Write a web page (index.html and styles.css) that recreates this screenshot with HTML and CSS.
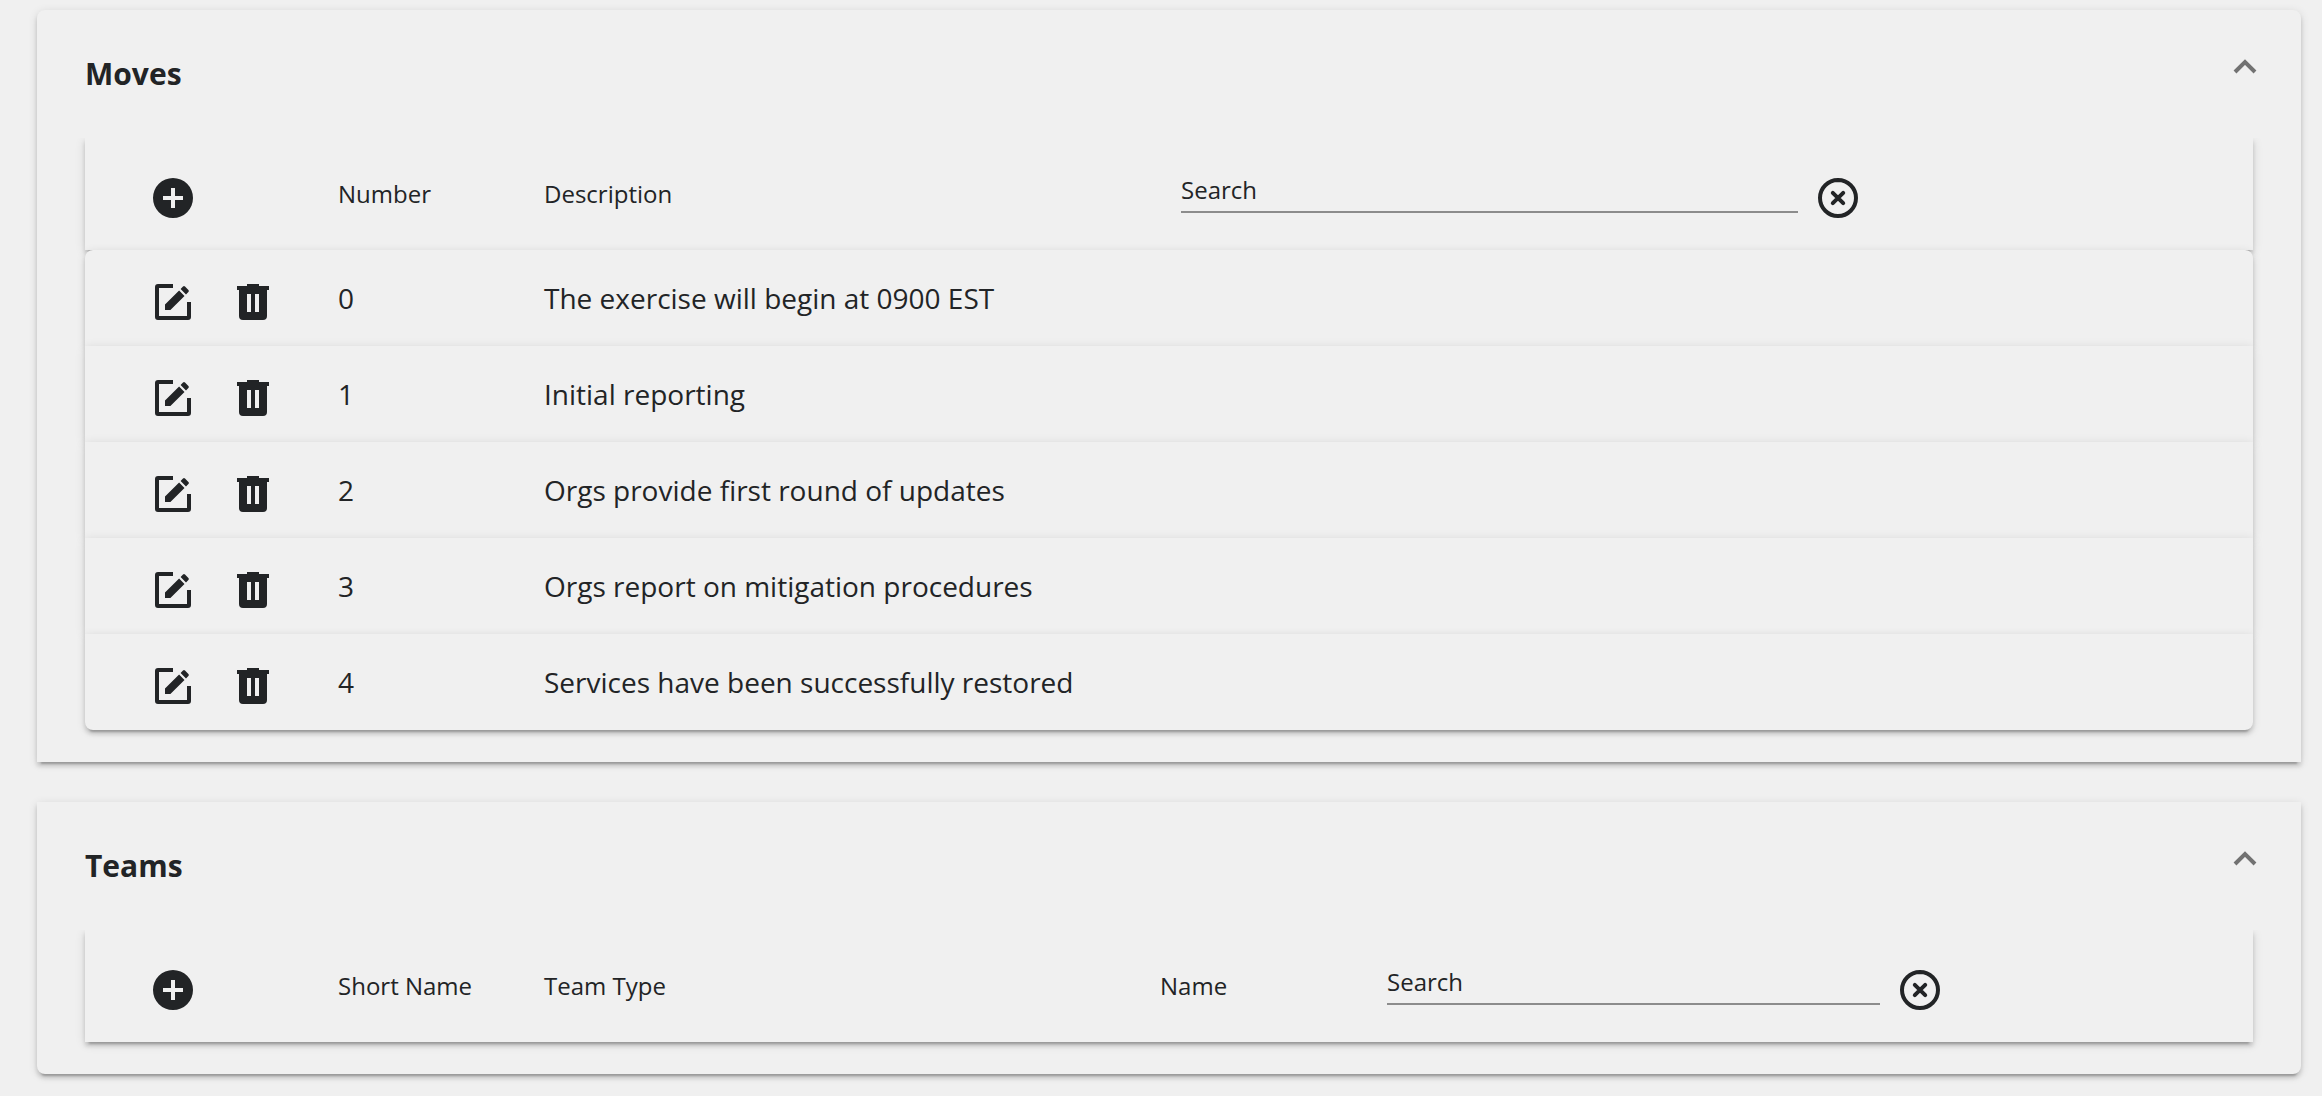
FILE: index.html
```html
<!DOCTYPE html>
<html lang="en">
<head>
<meta charset="utf-8">
<title>Exercise setup</title>
<link rel="stylesheet" href="styles.css">
</head>
<body>
<svg class="sprite" aria-hidden="true">
  <symbol id="plus" viewBox="0 0 24 24"><path d="M17 13H13V17H11V13H7V11H11V7H13V11H17M12 2A10 10 0 0 0 2 12A10 10 0 0 0 12 22A10 10 0 0 0 22 12A10 10 0 0 0 12 2Z"/></symbol>
  <symbol id="clear" viewBox="0 0 24 24"><path d="M12 3A9 9 0 0 1 12 21A9 9 0 0 1 12 3ZM9.400 9.400L14.600 14.600M14.600 9.400L9.400 14.600" fill="none" stroke="currentColor" stroke-width="2" stroke-linecap="round"/></symbol>
  <symbol id="edit" viewBox="0 0 24 24"><path d="M19 19V12H21V19.500A1.500 1.500 0 0 1 19.500 21H4.500A1.500 1.500 0 0 1 3 19.500V4.500A1.500 1.500 0 0 1 4.500 3H12V5H5V19H19M17.750 8.950L10.700 16H8V13.300L15.050 6.250L17.750 8.950M18.500 8.200L15.800 5.500L17 4.300Q17.500 3.800 18 4.300L19.700 6Q20.200 6.500 19.700 7Z"/></symbol>
  <symbol id="delete" viewBox="0 0 24 24"><path d="M9 3V4H4V6H5V19A2 2 0 0 0 7 21H17A2 2 0 0 0 19 19V6H20V4H15V3H9M9 8H11V17H9V8M13 8H15V17H13V8Z"/></symbol>
  <symbol id="chevron" viewBox="0 0 24 16"><path d="M2 13L12 3L22 13" fill="none" stroke="currentColor" stroke-width="4"/></symbol>
</svg>
<main class="page">
  <section class="card card-first">
    <header class="card-header">
      <h2>Moves</h2>
      <button class="toggle" aria-label="Collapse Moves"><svg><use href="#chevron"/></svg></button>
    </header>
    <table class="list moves">
      <thead>
        <tr class="row head-row">
          <th><button class="icon-button" aria-label="Add move"><svg><use href="#plus"/></svg></button></th>
          <th>Number</th>
          <th>Description</th>
          <th class="search"><input type="text" placeholder="Search" aria-label="Search moves"><button class="icon-button" aria-label="Clear search"><svg><use href="#clear"/></svg></button></th>
        </tr>
      </thead>
      <tbody>
        <tr class="row"><td><button class="icon-button" aria-label="Edit"><svg><use href="#edit"/></svg></button><button class="icon-button" aria-label="Delete"><svg><use href="#delete"/></svg></button></td><td>0</td><td>The exercise will begin at 0900 EST</td></tr>
        <tr class="row"><td><button class="icon-button" aria-label="Edit"><svg><use href="#edit"/></svg></button><button class="icon-button" aria-label="Delete"><svg><use href="#delete"/></svg></button></td><td>1</td><td>Initial reporting</td></tr>
        <tr class="row"><td><button class="icon-button" aria-label="Edit"><svg><use href="#edit"/></svg></button><button class="icon-button" aria-label="Delete"><svg><use href="#delete"/></svg></button></td><td>2</td><td>Orgs provide first round of updates</td></tr>
        <tr class="row"><td><button class="icon-button" aria-label="Edit"><svg><use href="#edit"/></svg></button><button class="icon-button" aria-label="Delete"><svg><use href="#delete"/></svg></button></td><td>3</td><td>Orgs report on mitigation procedures</td></tr>
        <tr class="row"><td><button class="icon-button" aria-label="Edit"><svg><use href="#edit"/></svg></button><button class="icon-button" aria-label="Delete"><svg><use href="#delete"/></svg></button></td><td>4</td><td>Services have been successfully restored</td></tr>
      </tbody>
    </table>
  </section>
  <section class="card card-last">
    <header class="card-header">
      <h2>Teams</h2>
      <button class="toggle" aria-label="Collapse Teams"><svg><use href="#chevron"/></svg></button>
    </header>
    <table class="list teams">
      <thead>
        <tr class="row head-row">
          <th><button class="icon-button" aria-label="Add team"><svg><use href="#plus"/></svg></button></th>
          <th>Short Name</th>
          <th>Team Type</th>
          <th>Name</th>
          <th class="search"><input type="text" placeholder="Search" aria-label="Search teams"><button class="icon-button" aria-label="Clear search"><svg><use href="#clear"/></svg></button></th>
        </tr>
      </thead>
    </table>
  </section>
</main>
</body>
</html>
```
FILE: styles.css
```css
:root {
  --surface: #f0f0f0;
  --ink: #222426;
  --elevation: 0 6px 2px -4px rgba(0, 0, 0, .2), 0 4px 4px 0 rgba(0, 0, 0, .14), 0 2px 10px 0 rgba(0, 0, 0, .12);
}

* { box-sizing: border-box; }

body {
  margin: 0;
  background: var(--surface);
  color: var(--ink);
  font-family: "Open Sans", "Noto Sans", sans-serif;
}

.sprite { display: none; }

.page {
  display: flex;
  flex-direction: column;
  gap: 40px;
  padding: 10px 21px 22px 37px;
}

.card {
  padding: 0 48px 32px;
  background: var(--surface);
  box-shadow: var(--elevation);
}

.card-first { border-radius: 8px 8px 0 0; }
.card-last { border-radius: 0 0 8px 8px; }

.card-header {
  display: flex;
  justify-content: space-between;
  height: 128px;
}

h2 {
  margin: 0;
  font-size: 30px;
  font-weight: 700;
  line-height: 128px;
}

button {
  padding: 0;
  border: 0;
  background: none;
  color: inherit;
}

svg { display: block; }

.toggle {
  align-self: flex-start;
  margin: 49px -4px 0 0;
  color: #727272;
}

.toggle svg { width: 24px; height: 16px; }

.list,
.list thead,
.list tbody { display: block; }

/* Keeps the header row's shadow off the card title */
.list { clip-path: inset(0 -20px -20px -20px); }

.row {
  display: grid;
  height: 96px;
  padding-left: 48px;
  background: var(--surface);
  box-shadow: var(--elevation);
}

.moves .row { grid-template-columns: 205px 206px 637fr 1072fr; }
.teams .row { grid-template-columns: 205px 206px 616fr 227fr 866fr; }

.head-row { height: 112px; }

tbody .row:first-child { border-radius: 8px 8px 0 0; }
tbody .row:last-child { border-radius: 0 0 8px 8px; }

th,
td {
  padding: 0;
  font-weight: 400;
  text-align: left;
}

th { font-size: 24px; line-height: 112px; }
td { font-size: 28px; line-height: 96px; }

th:first-child,
td:first-child {
  display: flex;
  align-items: center;
  padding-top: 8px;
}

.icon-button {
  display: flex;
  align-items: center;
  justify-content: center;
  width: 80px;
  height: 80px;
}

.icon-button svg {
  width: 48px;
  height: 48px;
  fill: currentColor;
}

.search {
  display: grid;
  align-items: start;
  padding-top: 20px;
}

.moves .search { grid-template-columns: 617fr 455fr; }
.teams .search { grid-template-columns: 493fr 373fr; }

.search input {
  width: 100%;
  height: 46px;
  margin-top: 9px;
  padding: 0;
  border: 0;
  border-bottom: 2px solid #8c8c8c;
  border-radius: 0;
  background: none;
  color: inherit;
  font: inherit;
  line-height: 32px;
}

.search input::placeholder { color: var(--ink); opacity: 1; }
```
